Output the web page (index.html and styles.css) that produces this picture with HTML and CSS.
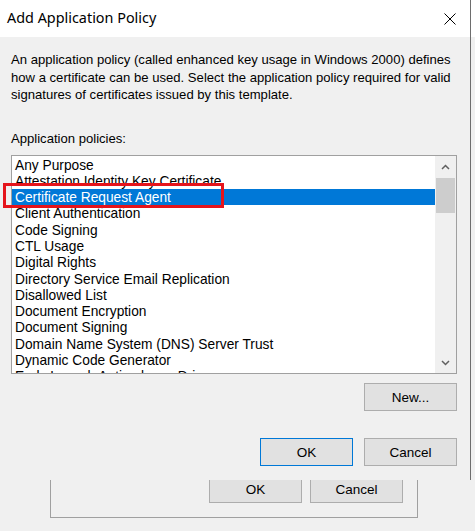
FILE: index.html
```html
<!DOCTYPE html>
<html lang="en">
<head>
<meta charset="utf-8">
<title>Add Application Policy</title>
<link rel="stylesheet" href="styles.css">
</head>
<body>
<div class="screen">
  <div class="backwin">
    <div class="back-title"></div>
    <div class="back-group">
      <button class="btn">OK</button>
      <button class="btn">Cancel</button>
    </div>
  </div>

  <div class="dialog">
    <div class="titlebar">
      <span class="title">Add Application Policy</span>
      <svg class="close" width="12" height="12" viewBox="0 0 12 12" aria-hidden="true">
        <path d="M0.5 0.5 L11.5 11.5 M11.5 0.5 L0.5 11.5" stroke="#000" stroke-width="1" fill="none"/>
      </svg>
    </div>
    <div class="body">
      <p class="desc">An application policy (called enhanced key usage in Windows 2000) defines<br>how a certificate can be used. Select the application policy required for valid<br>signatures of certificates issued by this template.</p>
      <div class="label">Application policies:</div>
      <div class="listbox">
        <ul class="items">
          <li class="item">Any Purpose</li>
          <li class="item">Attestation Identity Key Certificate</li>
          <li class="item selected">Certificate Request Agent</li>
          <li class="item">Client Authentication</li>
          <li class="item">Code Signing</li>
          <li class="item">CTL Usage</li>
          <li class="item">Digital Rights</li>
          <li class="item">Directory Service Email Replication</li>
          <li class="item">Disallowed List</li>
          <li class="item">Document Encryption</li>
          <li class="item">Document Signing</li>
          <li class="item">Domain Name System (DNS) Server Trust</li>
          <li class="item">Dynamic Code Generator</li>
          <li class="item">Early Launch Antimalware Driver</li>
        </ul>
        <div class="scrollbar">
          <div class="sb-btn">
            <svg width="9" height="6" viewBox="0 0 9 6" aria-hidden="true"><path d="M1 5 L4.5 1.5 L8 5" stroke="#606060" stroke-width="1.5" fill="none"/></svg>
          </div>
          <div class="thumb"></div>
          <div class="sb-track"></div>
          <div class="sb-btn">
            <svg width="9" height="6" viewBox="0 0 9 6" aria-hidden="true"><path d="M1 1 L4.5 4.5 L8 1" stroke="#606060" stroke-width="1.5" fill="none"/></svg>
          </div>
        </div>
      </div>
      <div class="row-new">
        <button class="btn">New...</button>
      </div>
      <div class="row-ok">
        <button class="btn btn-default">OK</button>
        <button class="btn">Cancel</button>
      </div>
    </div>
  </div>

  <div class="annotation"></div>
</div>
</body>
</html>
```

FILE: styles.css
```css
* { box-sizing: border-box; }
html, body { margin: 0; padding: 0; }
body {
  width: 475px;
  height: 531px;
  overflow: hidden;
  background: #f0f0f0;
  font-family: "Liberation Sans", Arial, sans-serif;
  color: #000;
}
.screen {
  position: relative;
  width: 475px;
  height: 531px;
  overflow: hidden;
}

/* window behind */
.backwin {
  position: absolute;
  inset: 0;
  background: #f0f0f0;
  display: flex;
  flex-direction: column;
  padding-bottom: 13px;
}
.back-title {
  height: 37px;
  background: #ffffff;
}
.back-group {
  margin-top: auto;
  margin-left: 50px;
  width: 368px;
  height: 90px;
  border: 1px solid #a0a0a0;
  display: flex;
  justify-content: flex-end;
  align-items: flex-end;
  gap: 8px;
  padding: 0 14px 14px 0;
}

/* buttons */
.btn {
  width: 93px;
  height: 28px;
  padding: 0;
  margin: 0;
  background: #e1e1e1;
  border: 1px solid #adadad;
  font-family: "Liberation Sans", Arial, sans-serif;
  font-size: 13.5px;
  color: #000;
}
.btn-default {
  border-color: #0078d7;
}

/* front dialog */
.dialog {
  position: absolute;
  left: 0;
  top: 0;
  width: 471px;
  height: 480px;
  background: #f0f0f0;
  border-right: 1px solid #6e6e6e;
  display: flex;
  flex-direction: column;
}
.titlebar {
  height: 37px;
  flex: none;
  background: #ffffff;
  display: flex;
  align-items: center;
  justify-content: space-between;
  padding: 0 14px 3px 7px;
}
.title {
  font-family: "Noto Sans", "Liberation Sans", sans-serif;
  font-size: 14.4px;
  color: #000;
}
.close { display: block; margin-top: 3px; }

.body {
  flex: 1;
  display: flex;
  flex-direction: column;
  padding: 14px 13px 0 11px;
}
.desc {
  margin: 0;
  font-size: 13.1px;
  line-height: 17.5px;
  white-space: nowrap;
}
.label {
  margin-top: 26px;
  font-size: 13.1px;
  line-height: 17.5px;
}
.listbox {
  margin-top: 8px;
  height: 219px;
  flex: none;
  border: 1px solid #a0a0a0;
  background: #ffffff;
  display: flex;
}
.items {
  flex: 1;
  list-style: none;
  margin: 0;
  padding: 0;
  overflow: hidden;
}
.item {
  height: 16.3px;
  padding: 2.5px 0 0 3px;
  line-height: 13.8px;
  font-size: 13.75px;
  white-space: nowrap;
}
.item.selected {
  background: #0078d7;
  color: #ffffff;
}
.scrollbar {
  width: 21px;
  flex: none;
  display: flex;
  flex-direction: column;
  background: #f0f0f0;
}
.sb-btn {
  height: 21px;
  flex: none;
  display: flex;
  align-items: center;
  justify-content: center;
}
.sb-btn svg { display: block; }
.thumb {
  height: 35px;
  flex: none;
  margin: 1px 1px 0 1px;
  background: #cdcdcd;
}
.sb-track { flex: 1; }

.row-new {
  margin-top: 9px;
  display: flex;
  justify-content: flex-end;
}
.row-ok {
  margin-top: 27px;
  display: flex;
  justify-content: flex-end;
  gap: 11px;
}

/* red annotation box drawn over the screenshot */
.annotation {
  position: absolute;
  left: 3px;
  top: 183px;
  width: 221px;
  height: 25px;
  border: 3px solid #e5141b;
}
```
